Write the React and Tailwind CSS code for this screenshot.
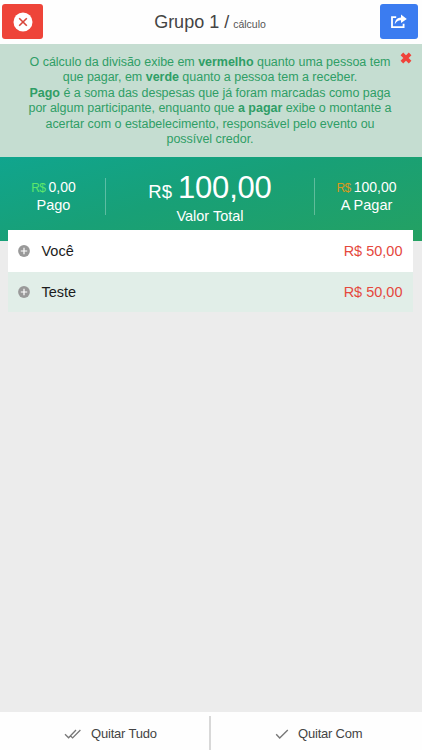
import React from 'react';

const helpLines = [
  ['O cálculo da divisão exibe em ', <b key="b">vermelho</b>, ' quanto uma pessoa tem'],
  ['que pagar, em ', <b key="b">verde</b>, ' quanto a pessoa tem a receber.'],
  [<b key="b">Pago</b>, ' é a soma das despesas que já foram marcadas como paga'],
  ['por algum participante, enquanto que ', <b key="b">a pagar</b>, ' exibe o montante a'],
  ['acertar com o estabelecimento, responsável pelo evento ou'],
  ['possível credor.'],
];

function CloseCircle() {
  return (
    <svg width="20" height="20" viewBox="0 0 20 20">
      <circle cx="10" cy="10" r="9.5" fill="#fff" />
      <path d="M6.2 6.2l7.6 7.6M13.8 6.2l-7.6 7.6" stroke="#d9463b" strokeWidth="1.6" />
    </svg>
  );
}

function ShareIcon() {
  return (
    <svg width="18" height="15" viewBox="0 0 18 15" fill="none">
      <path d="M6.2 3.2H2v10h11.6V9.8" stroke="#fff" strokeWidth="1.8" />
      <path d="M4.8 10.2C5 5.8 7.4 3.5 11 3.4V.6l5.8 4.3L11 9.1V6.3C8.4 6.2 6.4 7.4 4.8 10.2z" fill="#fff" />
    </svg>
  );
}

function CloseX() {
  return (
    <svg width="12" height="12" viewBox="0 0 12 12">
      <path d="M1.9 1.9l8.2 8.2M10.1 1.9L1.9 10.1" stroke="#f0433a" strokeWidth="3.7" />
    </svg>
  );
}

function PlusCircle() {
  return (
    <svg width="12" height="12" viewBox="0 0 12 12">
      <circle cx="6" cy="6" r="5.9" fill="#999" />
      <path d="M6 2.8v6.4M2.8 6h6.4" stroke="#fff" strokeWidth="1.2" />
    </svg>
  );
}

function Row({ name, value, className }) {
  return (
    <div className={`flex items-center pr-[10px] pl-[10px] ${className}`}>
      <PlusCircle />
      <span className="ml-[12px] flex-1 pt-px text-[14.5px] text-[#1c1c1c]">{name}</span>
      <span className="pt-px text-[14.5px] text-[#e5483d]">{value}</span>
    </div>
  );
}

export default function App() {
  return (
    <div className="flex h-[750px] w-[422px] flex-col overflow-hidden bg-[#ececec] font-['Liberation_Sans',Arial,sans-serif] whitespace-nowrap">
      <header className="flex h-[44px] shrink-0 items-start justify-between bg-[#fefefe] pt-[4px] pr-[4px] pl-[2px]">
        <button className="flex h-[35px] w-[41px] items-center justify-center rounded-[3px] bg-[#ee4439]">
          <CloseCircle />
        </button>
        <h1 className="flex h-[37px] items-center pr-[3px] text-[18px] text-[#444]">
          <span>
            Grupo 1 /<span className="ml-[4px] text-[10.5px] text-[#555]">cálculo</span>
          </span>
        </h1>
        <button className="flex h-[35px] w-[38px] items-center justify-center rounded-[3px] bg-[#3b7cf0]">
          <ShareIcon />
        </button>
      </header>

      <section className="relative flex h-[113px] shrink-0 flex-col items-center bg-[#c5ddd1] pt-[11px] pr-[2px] text-[12.5px] leading-[15.4px] tracking-[-0.03px] text-[#2f9e66]">
        {helpLines.map((line, i) => (
          <p key={i}>{line}</p>
        ))}
        <button className="absolute top-[8px] right-[10px]">
          <CloseX />
        </button>
      </section>

      <section className="flex h-[84px] shrink-0 bg-[linear-gradient(165deg,#10a58e_0%,#18a077_45%,#24a162_100%)] text-white">
        <div className="flex w-[105px] flex-col items-center pt-[21px] pl-[2px]">
          <div className="text-[14px] leading-[18px]">
            <span className="mr-[3px] text-[12px] tracking-[-0.5px] text-[#5fe66c]">R$</span>0,00
          </div>
          <div className="text-[14.5px] leading-[17px]">Pago</div>
        </div>
        <div className="mt-[21px] h-[37px] w-px bg-white/30" />
        <div className="flex w-[208px] flex-col items-center pt-[12px]">
          <div className="text-[31px] leading-[37px]">
            <span className="mr-[6px] text-[18.5px]">R$</span>
            <span className="tracking-[-0.2px]">100,00</span>
          </div>
          <div className="-mt-[3px] text-[14.5px] leading-[18px]">Valor Total</div>
        </div>
        <div className="mt-[21px] h-[37px] w-px bg-white/30" />
        <div className="flex w-[103px] flex-col items-center pt-[21px]">
          <div className="text-[14px] leading-[18px]">
            <span className="mr-[3px] text-[12px] tracking-[-0.5px] text-[#d9981e]">R$</span>100,00
          </div>
          <div className="text-[14.5px] leading-[17px]">A Pagar</div>
        </div>
      </section>

      <main className="-mt-[11px] mr-[9.5px] ml-[7.5px] flex-1">
        <Row name="Você" value="R$ 50,00" className="h-[42px] bg-white" />
        <Row name="Teste" value="R$ 50,00" className="h-[40px] bg-[#e1eee8]" />
      </main>

      <footer className="flex h-[38px] shrink-0 bg-[#fefefe] text-[13px] tracking-[-0.2px] text-[#444]">
        <button className="flex w-[209px] items-center pt-[5px] pl-[64px]">
          <svg width="18" height="12" viewBox="0 0 18 12" fill="none" stroke="#777" strokeWidth="1.3">
            <path d="M1 6.2l3.6 3.6L12 2M6.4 7.7l2.2 2.2L16.4 2" />
          </svg>
          <span className="ml-[9px]">Quitar Tudo</span>
        </button>
        <div className="mt-[4px] w-[2px] bg-[#d8d8d8]" />
        <button className="flex items-center pt-[5px] pl-[64px]">
          <svg width="14" height="12" viewBox="0 0 14 12" fill="none" stroke="#777" strokeWidth="1.4">
            <path d="M1.2 6.3l3.5 3.6L12.8 2" />
          </svg>
          <span className="ml-[9px]">Quitar Com</span>
        </button>
      </footer>
    </div>
  );
}
